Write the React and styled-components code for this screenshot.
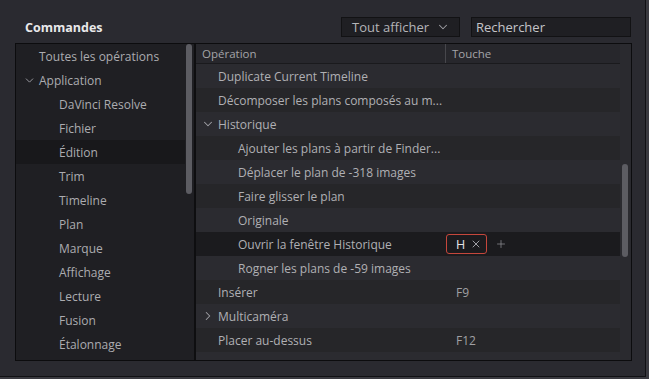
import styled, { createGlobalStyle } from 'styled-components'
import { ChevronDown, ChevronRight, X, Plus } from 'lucide-react'

const Global = createGlobalStyle`
  html, body { margin: 0; padding: 0; background: #3a3a40; }
  body { font-family: "Open Sans", "Liberation Sans", sans-serif; font-size: 12px; }
`

const Window = styled.div`
  width: 646px;
  height: 377px;
  background: #2a2a30;
  border-right: 1px solid #111114;
  border-bottom: 1px solid #111114;
  box-sizing: border-box;
  display: flex;
  flex-direction: column;
`

const TopBar = styled.div`
  display: flex;
  align-items: center;
  height: 20px;
  margin-top: 17px;
  padding-left: 25px;
`

const Title = styled.div`
  color: #e8e8ea;
  font-weight: 700;
  font-size: 12.5px;
  flex: 1;
`

const Select = styled.div`
  width: 119px;
  height: 20px;
  box-sizing: border-box;
  background: #1f1f23;
  border: 1px solid #121214;
  display: flex;
  align-items: center;
  justify-content: space-between;
  padding: 0 9px 0 10px;
  color: #b4b4b8;
  font-size: 13px;
`

const Search = styled.div`
  width: 160px;
  height: 20px;
  box-sizing: border-box;
  margin-left: 11px;
  margin-right: 14px;
  background: #1f1f23;
  border: 1px solid #121214;
  display: flex;
  align-items: center;
  padding-left: 4px;
  color: #c4c4c8;
  font-size: 13px;
`

const Panel = styled.div`
  margin: 6px 0 0 15px;
  width: 617px;
  height: 318px;
  box-sizing: border-box;
  border: 1px solid #0c0c0e;
  display: grid;
  grid-template-columns: 178px 2px 1fr;
  overflow: hidden;
`

const Divider = styled.div`
  background: #0e0e10;
`

const Side = styled.div`
  background: #1f1f23;
  display: grid;
  grid-template-columns: 1fr 9px;
`

const SideList = styled.div`
  display: flex;
  flex-direction: column;
`

const SideItem = styled.div`
  height: 24px;
  display: flex;
  align-items: center;
  padding-left: ${p => p.$indent}px;
  color: #acacb0;
  background: ${p => (p.$active ? '#18181b' : 'transparent')};
  svg { margin-left: -16px; margin-right: 3px; color: #9a9aa0; }
`

const Track = styled.div`
  display: flex;
  justify-content: center;
  padding-right: 2px;
  padding-top: ${p => p.$top}px;
  background: ${p => p.$bg || 'transparent'};
`

const Thumb = styled.div`
  width: 6px;
  height: ${p => p.$h}px;
  border-radius: 3px;
  background: #5c5c62;
`

const Table = styled.div`
  background: #2a2a2f;
  display: grid;
  grid-template-columns: 1fr 11px;
`

const Rows = styled.div`
  display: flex;
  flex-direction: column;
`

const Head = styled.div`
  height: 19px;
  display: grid;
  grid-template-columns: 249px 1fr;
  background: #27272c;
  border-bottom: 1px solid #1a1a1d;
  color: #a4a4a8;
  font-size: 11.5px;
`

const HeadCell = styled.div`
  display: flex;
  align-items: center;
  padding-left: 6px;
  border-left: ${p => (p.$sep ? '1px solid #47474c' : 'none')};
`

const Row = styled.div`
  height: 24px;
  flex-shrink: 0;
  display: grid;
  grid-template-columns: 250px 1fr;
  background: ${p => (p.$sel ? '#1b1b1e' : p.$odd ? '#2b2b30' : '#262629')};
  color: #b0b0b4;
`

const Name = styled.div`
  display: flex;
  align-items: center;
  padding-left: ${p => p.$indent}px;
  white-space: nowrap;
  overflow: hidden;
  svg { margin-left: -17px; margin-right: 3px; color: #a0a0a6; }
`

const Key = styled.div`
  display: flex;
  align-items: center;
  padding-left: 10px;
  color: #a0a0a4;
`

const Badge = styled.div`
  margin-left: -10px;
  width: 41px;
  height: 20px;
  box-sizing: border-box;
  border: 1px solid #c5473c;
  border-radius: 3px;
  display: flex;
  align-items: center;
  padding-left: 9px;
  gap: 5px;
  color: #e4e4e6;
  font-size: 12.5px;
  svg { color: #a0a0a6; }
`

const Add = styled.span`
  margin-left: 8px;
  display: flex;
  color: #8e8e94;
`

const sideItems = [
  { t: 'Toutes les opérations', i: 23 },
  { t: 'Application', i: 23, open: true },
  { t: 'DaVinci Resolve', i: 43 },
  { t: 'Fichier', i: 43 },
  { t: 'Édition', i: 43, active: true },
  { t: 'Trim', i: 43 },
  { t: 'Timeline', i: 43 },
  { t: 'Plan', i: 43 },
  { t: 'Marque', i: 43 },
  { t: 'Affichage', i: 43 },
  { t: 'Lecture', i: 43 },
  { t: 'Fusion', i: 43 },
  { t: 'Étalonnage', i: 43 },
]

const rows = [
  { t: 'Duplicate Current Timeline', i: 22 },
  { t: 'Décomposer les plans composés au m...', i: 22 },
  { t: 'Historique', i: 22, chev: 'down' },
  { t: 'Ajouter les plans à partir de Finder...', i: 42 },
  { t: 'Déplacer le plan de -318 images', i: 42 },
  { t: 'Faire glisser le plan', i: 42 },
  { t: 'Originale', i: 42 },
  { t: 'Ouvrir la fenêtre Historique', i: 42, sel: true, badge: 'H' },
  { t: 'Rogner les plans de -59 images', i: 42 },
  { t: 'Insérer', i: 22, k: 'F9' },
  { t: 'Multicaméra', i: 22, chev: 'right' },
  { t: 'Placer au-dessus', i: 22, k: 'F12' },
  { t: '', i: 22 },
]

export default function App() {
  return (
    <>
      <Global />
      <Window>
        <TopBar>
          <Title>Commandes</Title>
          <Select>
            Tout afficher
            <ChevronDown size={14} strokeWidth={1.8} color="#a0a0a6" />
          </Select>
          <Search>Rechercher</Search>
        </TopBar>
        <Panel>
          <Side>
            <SideList>
              {sideItems.map(s => (
                <SideItem key={s.t} $indent={s.i} $active={s.active}>
                  {s.open && <ChevronDown size={13} strokeWidth={1.8} />}
                  {s.t}
                </SideItem>
              ))}
            </SideList>
            <Track $top={0}>
              <Thumb $h={150} />
            </Track>
          </Side>
          <Divider />
          <Table>
            <Rows>
              <Head>
                <HeadCell>Opération</HeadCell>
                <HeadCell $sep>Touche</HeadCell>
              </Head>
              {rows.map((r, n) => (
                <Row key={n} $odd={n % 2 === 0} $sel={r.sel}>
                  <Name $indent={r.i}>
                    {r.chev === 'down' && <ChevronDown size={14} strokeWidth={1.8} />}
                    {r.chev === 'right' && <ChevronRight size={14} strokeWidth={1.8} />}
                    {r.t}
                  </Name>
                  <Key>
                    {r.badge && (
                      <>
                        <Badge>
                          {r.badge}
                          <X size={12} strokeWidth={2} />
                        </Badge>
                        <Add>
                          <Plus size={12} strokeWidth={1.5} />
                        </Add>
                      </>
                    )}
                    {r.k}
                  </Key>
                </Row>
              ))}
            </Rows>
            <Track $top={120} $bg="#2a2a2f">
              <Thumb $h={93} />
            </Track>
          </Table>
        </Panel>
      </Window>
    </>
  )
}
